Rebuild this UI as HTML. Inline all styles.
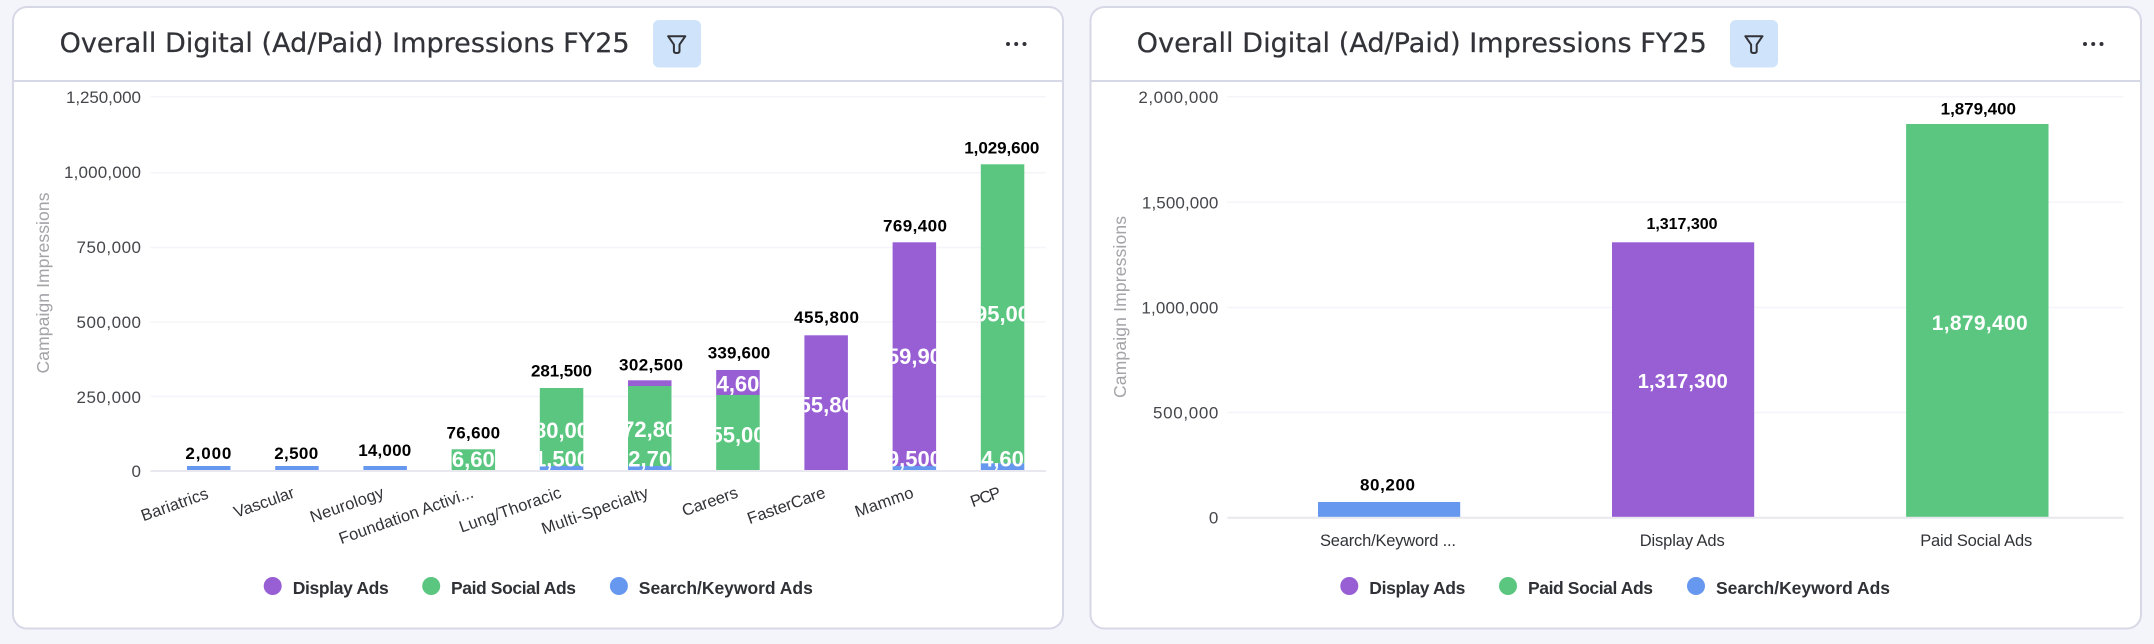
<!DOCTYPE html>
<html>
<head>
<meta charset="utf-8">
<title>Overall Digital (Ad/Paid) Impressions FY25</title>
<style>
html,body{margin:0;padding:0;background:#f4f5fb;width:2154px;height:644px;overflow:hidden}
svg{display:block}
text{font-family:"Liberation Sans",Arial,sans-serif}
.title{font-family:"DejaVu Sans",sans-serif;font-size:27px;fill:#323338;stroke:#323338;stroke-width:.25px}
.tick{font-size:17px;fill:#46474c;text-anchor:end}
.axis{font-size:17.5px;fill:#a3a3a8;text-anchor:middle}
.total{font-size:17px;font-weight:700;fill:#000;text-anchor:middle}
.inner{font-size:20px;font-weight:700;fill:#fff;text-anchor:middle}
.innerl{font-size:22px;font-weight:700;fill:#fff;text-anchor:middle}
.xl{font-size:16.5px;fill:#323338;text-anchor:end}
.xc{font-size:16.5px;fill:#323338;text-anchor:middle}
.leg{font-size:17.5px;font-weight:700;fill:#303136}
.grid{stroke:#f5f5f9;stroke-width:1.5}
.base{stroke:#e8e8ee;stroke-width:2}
.p{fill:#985ed4}.g{fill:#5bc680}.b{fill:#6698f0}
</style>
</head>
<body>
<svg width="2154" height="644" viewBox="0 0 2154 644" xmlns="http://www.w3.org/2000/svg">
<defs>
<clipPath id="c3"><rect x="451.6" y="449.3" width="43.5" height="20.7"/></clipPath>
<clipPath id="c4"><rect x="539.8" y="380" width="43.5" height="90"/></clipPath>
<clipPath id="c5"><rect x="628" y="380" width="43.5" height="90"/></clipPath>
<clipPath id="c6"><rect x="716.2" y="370" width="43.5" height="100"/></clipPath>
<clipPath id="c7"><rect x="804.4" y="335" width="43.5" height="135"/></clipPath>
<clipPath id="c8"><rect x="892.6" y="242" width="43.5" height="228"/></clipPath>
<clipPath id="c9"><rect x="980.8" y="164" width="43.5" height="306"/></clipPath>
</defs>

<!-- CARD 1 -->
<rect x="13" y="7" width="1050" height="621.5" rx="14" fill="#fff" stroke="#d7d8e5" stroke-width="2"/>
<line x1="13" y1="81" x2="1063" y2="81" stroke="#d7d8e5" stroke-width="2"/>
<text class="title" x="59.6" y="52" textLength="570">Overall Digital (Ad/Paid) Impressions FY25</text>
<rect x="653" y="20" width="48" height="47.5" rx="6" fill="#cfe3fb"/>
<path transform="translate(676.7 44)" d="M-8.6 -7.8H8.6L2.8 0.6V7Q2.8 9 0 9Q-2.8 9 -2.8 7V0.6Z" fill="none" stroke="#323338" stroke-width="2" stroke-linejoin="round"/>
<circle cx="1008" cy="44" r="2" fill="#323338"/><circle cx="1016.2" cy="44" r="2" fill="#323338"/><circle cx="1024.5" cy="44" r="2" fill="#323338"/>

<g>
<line class="grid" x1="150.5" x2="1046" y1="96.7" y2="96.7"/>
<line class="grid" x1="150.5" x2="1046" y1="172.7" y2="172.7"/>
<line class="grid" x1="150.5" x2="1046" y1="247.5" y2="247.5"/>
<line class="grid" x1="150.5" x2="1046" y1="322" y2="322"/>
<line class="grid" x1="150.5" x2="1046" y1="396.5" y2="396.5"/>
<line class="base" x1="150.5" x2="1046" y1="471" y2="471"/>
</g>
<text class="tick" x="141" y="103" textLength="75">1,250,000</text>
<text class="tick" x="141" y="178" textLength="77">1,000,000</text>
<text class="tick" x="141" y="253" textLength="64.5">750,000</text>
<text class="tick" x="141" y="328" textLength="64.5">500,000</text>
<text class="tick" x="141" y="403" textLength="64.5">250,000</text>
<text class="tick" x="141" y="477" textLength="9.6">0</text>
<text class="axis" transform="translate(49 283) rotate(-90)" textLength="181">Campaign Impressions</text>

<!-- bars left -->
<rect class="b" x="187" y="466" width="43.5" height="4"/>
<rect class="b" x="275.2" y="466" width="43.5" height="4"/>
<rect class="b" x="363.4" y="466" width="43.5" height="4"/>
<rect class="g" x="451.6" y="449.3" width="43.5" height="20.7"/>
<rect class="g" x="539.8" y="388" width="43.5" height="78"/><rect class="b" x="539.8" y="466" width="43.5" height="4"/>
<rect class="p" x="628" y="380.3" width="43.5" height="5.7"/><rect class="g" x="628" y="386" width="43.5" height="80"/><rect class="b" x="628" y="466" width="43.5" height="4"/>
<rect class="p" x="716.2" y="370" width="43.5" height="25"/><rect class="g" x="716.2" y="395" width="43.5" height="75"/>
<rect class="p" x="804.4" y="335.3" width="43.5" height="134.7"/>
<rect class="p" x="892.6" y="242.3" width="43.5" height="223.7"/><rect class="b" x="892.6" y="466" width="43.5" height="4"/>
<rect class="g" x="980.8" y="164.3" width="43.5" height="299"/><rect class="b" x="980.8" y="463.3" width="43.5" height="6.7"/>

<!-- inner labels -->
<g clip-path="url(#c3)"><text class="innerl" x="473.3" y="467">76,600</text></g>
<g clip-path="url(#c4)"><text class="innerl" x="561.5" y="438">280,000</text><text class="innerl" x="561.5" y="466.5">1,500</text></g>
<g clip-path="url(#c5)"><text class="innerl" x="649.7" y="437">272,800</text><text class="innerl" x="649.7" y="466.5">12,700</text></g>
<g clip-path="url(#c6)"><text class="innerl" x="738" y="391.5">84,600</text><text class="innerl" x="738" y="442.5">255,000</text></g>
<g clip-path="url(#c7)"><text class="innerl" x="826.2" y="412.5">455,800</text></g>
<g clip-path="url(#c8)"><text class="innerl" x="914.4" y="364">759,900</text><text class="innerl" x="914.4" y="466.5">9,500</text></g>
<g clip-path="url(#c9)"><text class="innerl" x="1002.5" y="321.5">995,000</text><text class="innerl" x="1002.5" y="466.5">34,600</text></g>

<!-- totals -->
<text class="total" x="208.4" y="459" textLength="46">2,000</text>
<text class="total" x="296.2" y="459" textLength="44">2,500</text>
<text class="total" x="384.7" y="456" textLength="53">14,000</text>
<text class="total" x="473.3" y="438.3" textLength="53.5">76,600</text>
<text class="total" x="561.5" y="376.3" textLength="61">281,500</text>
<text class="total" x="651" y="370.3" textLength="64">302,500</text>
<text class="total" x="739" y="358.3" textLength="62.5">339,600</text>
<text class="total" x="826.5" y="323" textLength="65">455,800</text>
<text class="total" x="915" y="231.3" textLength="64">769,400</text>
<text class="total" x="1001.8" y="153.3" textLength="75">1,029,600</text>

<!-- x labels -->
<text class="xl" transform="translate(209.4 498) rotate(-19.5)" textLength="70">Bariatrics</text>
<text class="xl" transform="translate(295.5 497) rotate(-19.5)" textLength="63">Vascular</text>
<text class="xl" transform="translate(385 497) rotate(-19.5)" textLength="77">Neurology</text>
<text class="xl" transform="translate(474.6 497) rotate(-19.5)" textLength="141.5">Foundation Activi...</text>
<text class="xl" transform="translate(562.4 497) rotate(-19.5)" textLength="107">Lung/Thoracic</text>
<text class="xl" transform="translate(649.5 497) rotate(-19.5)" textLength="112">Multi-Specialty</text>
<text class="xl" transform="translate(739 497) rotate(-19.5)" textLength="58">Careers</text>
<text class="xl" transform="translate(826.5 497) rotate(-19.5)" textLength="81.5">FasterCare</text>
<text class="xl" transform="translate(914.7 497) rotate(-19.5)" textLength="61">Mammo</text>
<text class="xl" transform="translate(1002 497) rotate(-19.5)" textLength="31">PCP</text>

<!-- legend left -->
<circle class="p" cx="272.7" cy="586" r="9"/><text class="leg" x="292.7" y="594" textLength="96">Display Ads</text>
<circle class="g" cx="431.2" cy="586" r="9"/><text class="leg" x="451" y="594" textLength="125">Paid Social Ads</text>
<circle class="b" cx="618.9" cy="586" r="9"/><text class="leg" x="638.8" y="594" textLength="174">Search/Keyword Ads</text>

<!-- CARD 2 -->
<rect x="1090.5" y="7" width="1050.5" height="621.5" rx="14" fill="#fff" stroke="#d7d8e5" stroke-width="2"/>
<line x1="1090.5" y1="81" x2="2141" y2="81" stroke="#d7d8e5" stroke-width="2"/>
<text class="title" x="1136.8" y="52" textLength="570">Overall Digital (Ad/Paid) Impressions FY25</text>
<rect x="1730" y="20" width="48" height="47.5" rx="6" fill="#cfe3fb"/>
<path transform="translate(1753.9 44)" d="M-8.6 -7.8H8.6L2.8 0.6V7Q2.8 9 0 9Q-2.8 9 -2.8 7V0.6Z" fill="none" stroke="#323338" stroke-width="2" stroke-linejoin="round"/>
<circle cx="2085" cy="44" r="2" fill="#323338"/><circle cx="2093.2" cy="44" r="2" fill="#323338"/><circle cx="2101.5" cy="44" r="2" fill="#323338"/>

<g>
<line class="grid" x1="1227.4" x2="2123.4" y1="96.7" y2="96.7"/>
<line class="grid" x1="1227.4" x2="2123.4" y1="202.3" y2="202.3"/>
<line class="grid" x1="1227.4" x2="2123.4" y1="307.5" y2="307.5"/>
<line class="grid" x1="1227.4" x2="2123.4" y1="412.5" y2="412.5"/>
<line class="base" x1="1227.4" x2="2123.4" y1="517.8" y2="517.8"/>
</g>
<text class="tick" x="1218.4" y="103" textLength="80">2,000,000</text>
<text class="tick" x="1218.4" y="208.5" textLength="76.5">1,500,000</text>
<text class="tick" x="1218.4" y="313.5" textLength="77">1,000,000</text>
<text class="tick" x="1218.4" y="418.5" textLength="65.4">500,000</text>
<text class="tick" x="1218.4" y="523.5" textLength="10">0</text>
<text class="axis" transform="translate(1126 307) rotate(-90)" textLength="182">Campaign Impressions</text>

<rect class="b" x="1318" y="502" width="142.2" height="14.8"/>
<rect class="p" x="1612" y="242.3" width="142.2" height="274.5"/>
<rect class="g" x="1906.1" y="124" width="142.4" height="392.8"/>

<text class="total" x="1387.5" y="490.3" textLength="55">80,200</text>
<text class="total" style="font-size:16px" x="1682" y="229" textLength="71">1,317,300</text>
<text class="total" x="1978.3" y="114.3" textLength="75.3">1,879,400</text>
<text class="inner" x="1682.7" y="387.8" textLength="90">1,317,300</text>
<text class="inner" style="font-size:21px" x="1979.7" y="330" textLength="96">1,879,400</text>

<text class="xc" x="1388" y="546" textLength="136">Search/Keyword ...</text>
<text class="xc" x="1682.2" y="546" textLength="85">Display Ads</text>
<text class="xc" x="1976.2" y="546" textLength="112">Paid Social Ads</text>

<circle class="p" cx="1349.3" cy="586" r="9"/><text class="leg" x="1369.3" y="594" textLength="96">Display Ads</text>
<circle class="g" cx="1508" cy="586" r="9"/><text class="leg" x="1528" y="594" textLength="125">Paid Social Ads</text>
<circle class="b" cx="1696" cy="586" r="9"/><text class="leg" x="1716" y="594" textLength="174">Search/Keyword Ads</text>
</svg>
</body>
</html>
